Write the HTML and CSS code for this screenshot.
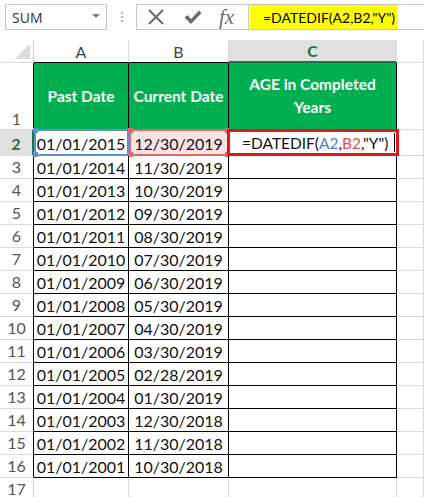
FILE: index.html
```html
<!DOCTYPE html>
<html>
<head>
<meta charset="utf-8">
<link rel="stylesheet" href="styles.css">
</head>
<body>
<div class="toolbar">
  <div class="namebox"><span class="nb-text">SUM</span><span class="caret"></span></div>
  <div class="dots"><span></span><span></span><span></span></div>
  <div class="fbar">
    <div class="btns">
      <svg class="ico" width="18" height="18" viewBox="0 0 18 18"><path d="M2 2 L16 16 M16 2 L2 16" stroke="#6b6b6b" stroke-width="2" fill="none"/></svg>
      <svg class="ico" width="18" height="18" viewBox="0 0 18 18"><path d="M0.5 9.5 L3.5 7 L7 11 L15 2.5 L17.5 5 L7 16 Z" fill="#6b6b6b"/></svg>
      <span class="fx">fx</span>
    </div>
    <div class="finput"><span class="hl">=DATEDIF(A2,B2,"Y")</span></div>
  </div>
</div>
<div class="sheet">
  <div class="ch corner"><span class="tri"></span></div>
  <div class="ch bk">A</div>
  <div class="ch bk">B</div>
  <div class="ch bk sel">C</div>
  <div class="ch"></div>

  <div class="rh rh1 bkr">1</div>
  <div class="hd">Past Date</div>
  <div class="hd">Current Date</div>
  <div class="hd">AGE in Completed<br>Years</div>
  <div class="c"></div>

  <div class="rh bkr rsel">2</div>
  <div class="d a2">01/01/2015<span class="ref-blue"><i class="q tl"></i><i class="q bl"></i></span></div>
  <div class="d b2">12/30/2019<span class="ref-red"><i class="q tl"></i><i class="q tr"></i><i class="q bl"></i><i class="q br"></i></span></div>
  <div class="d c2"><span class="ftxt">=DATEDIF(<span class="blue">A2</span>,<span class="red">B2</span>,"Y")</span><span class="cursor"></span><span class="active"></span></div>
  <div class="c"></div>

  <div class="rh bkr">3</div><div class="d">01/01/2014</div><div class="d">11/30/2019</div><div class="d"></div><div class="c"></div>
  <div class="rh bkr">4</div><div class="d">01/01/2013</div><div class="d">10/30/2019</div><div class="d"></div><div class="c"></div>
  <div class="rh bkr">5</div><div class="d">01/01/2012</div><div class="d">09/30/2019</div><div class="d"></div><div class="c"></div>
  <div class="rh bkr">6</div><div class="d">01/01/2011</div><div class="d">08/30/2019</div><div class="d"></div><div class="c"></div>
  <div class="rh bkr">7</div><div class="d">01/01/2010</div><div class="d">07/30/2019</div><div class="d"></div><div class="c"></div>
  <div class="rh bkr">8</div><div class="d">01/01/2009</div><div class="d">06/30/2019</div><div class="d"></div><div class="c"></div>
  <div class="rh bkr">9</div><div class="d">01/01/2008</div><div class="d">05/30/2019</div><div class="d"></div><div class="c"></div>
  <div class="rh bkr">10</div><div class="d">01/01/2007</div><div class="d">04/30/2019</div><div class="d"></div><div class="c"></div>
  <div class="rh bkr">11</div><div class="d">01/01/2006</div><div class="d">03/30/2019</div><div class="d"></div><div class="c"></div>
  <div class="rh bkr">12</div><div class="d">01/01/2005</div><div class="d">02/28/2019</div><div class="d"></div><div class="c"></div>
  <div class="rh bkr">13</div><div class="d">01/01/2004</div><div class="d">01/30/2019</div><div class="d"></div><div class="c"></div>
  <div class="rh bkr">14</div><div class="d">01/01/2003</div><div class="d">12/30/2018</div><div class="d"></div><div class="c"></div>
  <div class="rh bkr">15</div><div class="d">01/01/2002</div><div class="d">11/30/2018</div><div class="d"></div><div class="c"></div>
  <div class="rh bkr">16</div><div class="d">01/01/2001</div><div class="d">10/30/2018</div><div class="d"></div><div class="c"></div>
  <div class="rh">17</div><div class="c"></div><div class="c"></div><div class="c"></div><div class="c"></div>
</div>
</body>
</html>
```
FILE: styles.css
```css
* { box-sizing: border-box; }
html, body { margin: 0; padding: 0; background: #fff; }
body { width: 424px; height: 497px; overflow: hidden; font-family: Lato, "Open Sans", sans-serif; }

.toolbar { height: 40px; display: flex; align-items: flex-start; padding-top: 4px; padding-left: 5px; }
.namebox { width: 102px; height: 26px; border: 1px solid #c6c6c6; display: flex; align-items: center; justify-content: space-between; padding: 0 6px 0 6px; }
.nb-text { font-family: "Open Sans", sans-serif; font-size: 14px; color: #333; }
.caret { width: 0; height: 0; border-left: 4px solid transparent; border-right: 4px solid transparent; border-top: 4px solid #7a7a7a; margin-top: -3px; }
.dots { width: 29px; height: 26px; display: flex; flex-direction: column; align-items: center; justify-content: center; gap: 2px; }
.dots span { width: 2px; height: 2px; background: #b0b0b0; }
.fbar { flex: 1; display: flex; height: 26px; }
.btns { width: 113px; height: 26px; border: 1px solid #c6c6c6; display: flex; align-items: center; padding-left: 10px; gap: 19px; }
.fx { font-family: "Liberation Serif", serif; font-style: italic; font-size: 21px; color: #6b6b6b; line-height: 1; margin-left: -2px; }
.finput { flex: 1; height: 26px; border-top: 1px solid #c6c6c6; border-bottom: 1px solid #c6c6c6; padding-left: 1px; display: flex; }
.hl { background: #ffff00; height: 24px; width: 147px; display: flex; align-items: center; padding-left: 13px; font-family: Lato, sans-serif; font-size: 14px; color: #000; }

.sheet { display: grid; grid-template-columns: 34px 95px 100px 168px 1fr; grid-template-rows: 23px 67px 26px repeat(14, 23px) 23px; }
.sheet > div { border-right: 1px solid #dadada; border-bottom: 1px solid #dadada; }
.ch { display: flex; align-items: center; justify-content: center; font-size: 16px; color: #444; position: relative; }
.ch.bk { border-bottom-color: #000; }
.tri { position: absolute; right: 3px; bottom: 3px; width: 0; height: 0; border-left: 15px solid transparent; border-bottom: 15px solid #dcdcdc; }
.ch.sel { background: #e1e1e1; color: #217346; font-weight: bold; border-bottom: 2px solid #217346; }
.rh { display: flex; align-items: flex-end; justify-content: center; font-size: 16px; color: #555; padding-bottom: 1px; line-height: 20px; }
.rh.bkr { border-right-color: #000; }
.rh1 { padding-bottom: 0; }
.rsel { background: #e1e1e1; color: #217346; font-weight: bold; border-right: 2px solid #217346 !important; }
.sheet > .hd { background: #00b050; color: #fff; font-weight: bold; font-size: 15.5px; display: flex; align-items: center; justify-content: center; text-align: center; line-height: 23px; border-right-color: #000; border-bottom-color: #000; }
.sheet > .d { display: flex; align-items: center; justify-content: center; font-size: 16px; color: #111; border-right-color: #000; border-bottom-color: #000; position: relative; padding-top: 1px; }
.b2 { background: #fbe3e3; }
.ref-blue { position: absolute; left: 0; top: -1px; right: -1px; bottom: -1px; border: 2px solid #5b8fd6; }
.ref-red { position: absolute; left: 0; top: -1px; right: -1px; bottom: -1px; border: 2px solid #e06a6a; }
.ref-blue .q { background: #5b8fd6; }
.ref-red .q { background: #e06a6a; }
.q { position: absolute; width: 5px; height: 5px; }
.q.tl { left: -3px; top: -3px; }
.q.tr { right: -3px; top: -3px; }
.q.bl { left: -3px; bottom: -3px; }
.q.br { right: -3px; bottom: -3px; }
.sheet > .c2 { justify-content: flex-start; padding-left: 13px; }
.ftxt { font-size: 15.5px; }
.blue { color: #4a7fd0; }
.red { color: #d9534f; }
.cursor { position: absolute; left: 165px; top: 3px; width: 1px; height: 19px; background: #000; }
.active { position: absolute; left: -2px; top: -1px; right: -3px; bottom: -1px; border: 3px solid #e3141b; }
```
